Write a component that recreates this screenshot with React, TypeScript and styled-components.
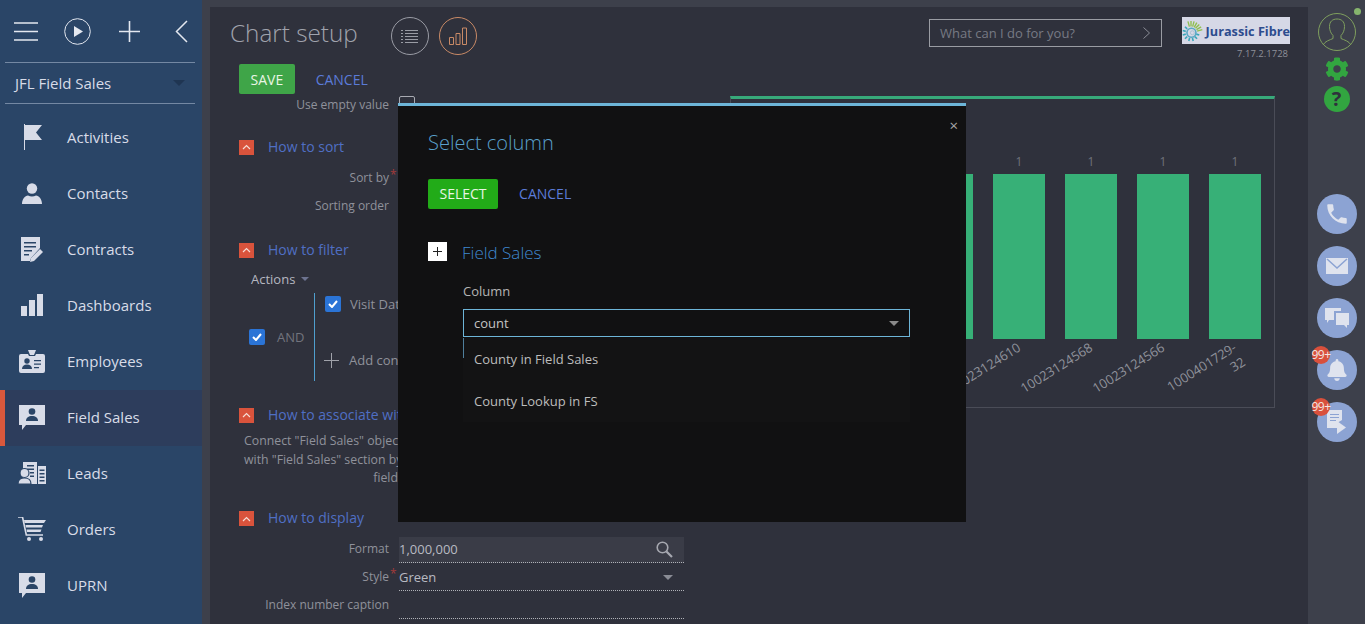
import React from "react";
import styled, { createGlobalStyle } from "styled-components";
import { FaCog, FaBell } from "react-icons/fa";

const GlobalStyle = createGlobalStyle`
  html, body {
    margin: 0;
    height: 100%;
    overflow: hidden;
    background: #3d404b;
    font-family: "Open Sans", "Liberation Sans", sans-serif;
    font-size: 13px;
  }
`;

const NAVY = "#2a4567";

const FlagIcon = () => (
  <svg width="20" height="26" viewBox="-1 0 20 26" fill="currentColor">
    <path d="M1 0h1v26H1zM2 1h17l-6 7.500 6 7.500H2z" />
  </svg>
);
const PersonIcon = () => (
  <svg width="20" height="21" viewBox="0 0 20 21" fill="currentColor">
    <circle cx="10" cy="5.500" r="5.200" />
    <path d="M0 21c0-5 3-8 6-8.500 2.500 1.300 5.500 1.300 8 0 3 .5 6 3.500 6 8.500z" />
  </svg>
);
const ContractIcon = () => (
  <svg width="23" height="25" viewBox="0 0 23 25" fill="currentColor">
    <path d="M0 0h19v11l-9 10-1 3H0z" />
    <path d="M3 5h12v1.500H3zM3 9h12v1.500H3zM3 13h8v1.500H3zM3 17h5v1.500H3z" fill={NAVY} />
    <path d="M19 12l3 3-9 9-4 1 1-4z" />
  </svg>
);
const BarsIcon = () => (
  <svg width="22" height="22" viewBox="0 0 22 22" fill="currentColor">
    <path d="M0 12h6v10H0zM8 6h6v16H8zM16 0h6v22h-6z" />
  </svg>
);
const BadgeIcon = () => (
  <svg width="26" height="23" viewBox="0 0 26 23" fill="currentColor">
    <path d="M9 0h8l-2 5h-4z" />
    <path d="M2 4h7l1 2h6l1-2h7a2 2 0 0 1 2 2v15a2 2 0 0 1-2 2H2a2 2 0 0 1-2-2V6a2 2 0 0 1 2-2z" />
    <circle cx="8" cy="11" r="2.700" fill={NAVY} />
    <path d="M3 19c0-3 2-4.500 5-4.500s5 1.500 5 4.500z" fill={NAVY} />
    <path d="M15 10h7v1.300h-7zM15 13.500h7v1.300h-7zM15 17h5v1.300h-5z" fill={NAVY} />
  </svg>
);
const BubblePersonIcon = () => (
  <svg width="26" height="25" viewBox="0 0 26 25" fill="currentColor">
    <path d="M0 0h26v20H7l-4 5v-5H0z" />
    <circle cx="13" cy="6.500" r="3.300" fill={NAVY} />
    <path d="M7 16c0-3.500 2.500-5 6-5s6 1.500 6 5z" fill={NAVY} />
  </svg>
);
const LeadsIcon = () => (
  <svg width="28" height="22" viewBox="0 0 28 22" fill="currentColor">
    <path d="M5 0h14v22H5z" />
    <path d="M20 4h8v18h-8z" />
    <path d="M9 3h7v1.500H9zM9 6.500h7V8H9zM12 10h4v1.500h-4zM12 13.500h4V15h-4zM21.500 7.500h5V9h-5zM21.500 11h5v1.500h-5zM21.500 14.500h5V16h-5zM21.500 18h5v1.500h-5z" fill={NAVY} />
    <circle cx="6.500" cy="11" r="4.500" stroke={NAVY} strokeWidth="1.200" />
    <path d="M0 22c0-4 2.500-6 6.500-6s6.500 2 6.500 6z" stroke={NAVY} strokeWidth="1.200" />
  </svg>
);
const CartIcon = () => (
  <svg width="28" height="24" viewBox="0 0 28 24" fill="currentColor">
    <path d="M0 0h4.500l3.800 18H25" fill="none" stroke="currentColor" strokeWidth="1.600" />
    <path d="M6 3h22l-2 3H6.500zM7.500 8H25l-1 2.500H8zM8.500 12.500h15l-1 2.500H9z" />
    <circle cx="11" cy="22" r="2" />
    <circle cx="23" cy="22" r="2" />
  </svg>
);

const MENU = [
  { label: "Activities", icon: <FlagIcon /> },
  { label: "Contacts", icon: <PersonIcon /> },
  { label: "Contracts", icon: <ContractIcon /> },
  { label: "Dashboards", icon: <BarsIcon /> },
  { label: "Employees", icon: <BadgeIcon /> },
  { label: "Field Sales", icon: <BubblePersonIcon />, active: true },
  { label: "Leads", icon: <LeadsIcon /> },
  { label: "Orders", icon: <CartIcon /> },
  { label: "UPRN", icon: <BubblePersonIcon /> },
];

const BARS: { value: number; label: string }[] = [
  { value: 1, label: "10023124612" },
  { value: 1, label: "10023124610" },
  { value: 1, label: "10023124568" },
  { value: 1, label: "10023124566" },
  { value: 1, label: "1000401729-\n32" },
];

const Page = styled.div`
  position: relative;
  display: flex;
  width: 1365px;
  height: 624px;
  overflow: hidden;
  background: #3d404b;
`;

const Sidebar = styled.nav`
  width: 202px;
  flex-shrink: 0;
  background: ${NAVY};
  color: #d8dce8;
`;

const QuickBar = styled.div`
  height: 63px;
  margin: 0 7px 0 5px;
  display: flex;
  align-items: center;
  padding-left: 9px;
  box-sizing: border-box;
  border-bottom: 1px solid #7488a3;
  color: #e4e8f0;
`;

const QuickSlot = styled.span<{ $left: number }>`
  display: flex;
  margin-left: ${(p) => p.$left}px;
`;

const WorkplaceSelect = styled.div`
  height: 40px;
  margin: 0 7px 6px 5px;
  padding: 0 10px;
  display: flex;
  align-items: center;
  justify-content: space-between;
  border-bottom: 1px solid #7488a3;
  font-size: 15px;
  color: #d8dce8;
`;

const Caret = styled.span<{ $color?: string; $size?: number }>`
  display: inline-block;
  width: 0;
  height: 0;
  border-left: ${(p) => p.$size ?? 6}px solid transparent;
  border-right: ${(p) => p.$size ?? 6}px solid transparent;
  border-top: ${(p) => p.$size ?? 6}px solid ${(p) => p.$color ?? "#1f3552"};
`;

const MenuItem = styled.div<{ $active?: boolean }>`
  height: 56px;
  display: flex;
  align-items: center;
  font-size: 15px;
  box-sizing: border-box;
  padding-bottom: 2px;
  background: ${(p) => (p.$active ? "#2d3d5c" : "transparent")};
  box-shadow: ${(p) => (p.$active ? "inset 5px 0 0 #d9583c" : "none")};
`;

const MenuIcon = styled.span`
  width: 64px;
  margin-right: 3px;
  display: flex;
  justify-content: center;
`;

const Main = styled.main`
  flex: 1;
  margin: 7px 0 0 8px;
  background: #2f313c;
  min-width: 0;
`;

const Header = styled.header`
  height: 57px;
  display: flex;
  align-items: flex-start;
  padding: 0 18px 0 20px;
`;

const Title = styled.h1`
  margin: 8px 33px 0 0;
  font-size: 24.300px;
  line-height: 36px;
  font-weight: 300;
  color: #a0a3ad;
`;

const ViewButton = styled.div<{ $color: string }>`
  width: 38px;
  height: 38px;
  margin: 10px 10px 0 0;
  box-sizing: border-box;
  border: 1px solid ${(p) => p.$color};
  border-radius: 50%;
  color: ${(p) => p.$color};
  display: flex;
  align-items: center;
  justify-content: center;
`;

const SearchBox = styled.div`
  margin: 12px 20px 0 auto;
  width: 233px;
  height: 28px;
  box-sizing: border-box;
  border: 1px solid #9a9ca3;
  padding: 0 11px 0 10px;
  display: flex;
  align-items: center;
  justify-content: space-between;
  color: #777a84;
  font-size: 13px;
`;

const Brand = styled.div`
  margin-top: 10px;
  display: flex;
  flex-direction: column;
  align-items: flex-end;
`;

const Logo = styled.div`
  width: 108px;
  height: 27px;
  background: #d6d8e6;
  display: flex;
  align-items: center;
  gap: 2px;
  overflow: hidden;
`;

const LogoText = styled.span`
  font-size: 12.700px;
  font-weight: 700;
  color: #2d4c8e;
  white-space: nowrap;
`;

const Version = styled.div`
  margin: 3px 2px 0 0;
  font-size: 9.500px;
  line-height: 14px;
  color: #8e9099;
`;

const Body = styled.div`
  display: flex;
  align-items: flex-start;
`;

const Form = styled.section`
  width: 520px;
  flex-shrink: 0;
  box-sizing: border-box;
  padding-left: 29px;
`;

const Actions = styled.div`
  display: flex;
  align-items: center;
  gap: 21px;
`;

const PrimaryButton = styled.div<{ $color: string }>`
  height: 30px;
  box-sizing: border-box;
  padding: 0 11.500px;
  border-radius: 2px;
  display: flex;
  align-items: center;
  background: ${(p) => p.$color};
  color: #e9f5e4;
  font-size: 14px;
`;

const LinkButton = styled.span`
  color: #5b7bd8;
  font-size: 14px;
`;

const Row = styled.div<{ $height?: number }>`
  display: flex;
  align-items: center;
  height: ${(p) => p.$height ?? 28}px;
  gap: 10px;
`;

const RowLabel = styled.label`
  width: 150px;
  flex-shrink: 0;
  text-align: right;
  color: #8f919b;
  font-size: 12px;
  white-space: nowrap;
`;

const Required = styled.span`
  position: relative;
  &::after {
    content: "*";
    position: absolute;
    left: 1px;
    top: -3px;
    color: #a23a3a;
  }
`;

const EmptyCheck = styled.span`
  width: 16px;
  height: 16px;
  box-sizing: border-box;
  border: 1px solid #a8aab2;
  border-radius: 2px;
`;

const SectionHead = styled.div<{ $top: number }>`
  margin-top: ${(p) => p.$top}px;
  height: 16px;
  display: flex;
  align-items: center;
  gap: 14px;
  color: #4f6fc4;
  font-size: 14px;
  white-space: nowrap;
`;

const SectionTitle = styled.span`
  margin-top: -2px;
`;

const Toggle = styled.span`
  width: 15px;
  height: 15px;
  background: #d9533c;
  display: flex;
  align-items: center;
  justify-content: center;
`;

const SectionBody = styled.div`
  margin-top: 8px;
`;

const ActionsMenu = styled.div`
  height: 27px;
  padding: 0 0 2px 12px;
  box-sizing: border-box;
  display: flex;
  align-items: center;
  gap: 6px;
  color: #b5b7c0;
  font-size: 13px;
`;

const FilterGroup = styled.div`
  display: flex;
  height: 88px;
`;

const GroupLogic = styled.div`
  width: 75px;
  box-sizing: border-box;
  padding-left: 10px;
  display: flex;
  align-items: center;
  gap: 12px;
  color: #72747e;
  font-size: 13px;
`;

const GroupItems = styled.div`
  flex: 1;
  border-left: 1px solid #4f9fce;
  padding-left: 10px;
  display: flex;
  flex-direction: column;
  gap: 34px;
`;

const FilterLine = styled.div<{ $gap: number }>`
  height: 22px;
  display: flex;
  align-items: center;
  gap: ${(p) => p.$gap}px;
  color: #8f919b;
  font-size: 13px;
  white-space: nowrap;
`;

const CheckBox = styled.span`
  width: 16px;
  height: 16px;
  border-radius: 2px;
  background: #2b74d6;
  display: flex;
  align-items: center;
  justify-content: center;
`;

const AddMark = styled.svg`
  margin-left: -1px;
`;

const Description = styled.div`
  width: 154px;
  margin: 9px 0 0 5px;
  text-align: right;
  white-space: nowrap;
  font-size: 12.300px;
  line-height: 18.500px;
  color: #8f919b;
`;

const FieldBox = styled.div<{ $filled?: boolean }>`
  width: 285px;
  height: 26px;
  margin-top: 2px;
  box-sizing: border-box;
  display: flex;
  align-items: center;
  justify-content: space-between;
  padding-right: 11px;
  background: ${(p) => (p.$filled ? "#3a3c47" : "transparent")};
  border-bottom: 1px dotted #b0b2b8;
  color: #b8bac2;
  font-size: 13px;
`;

const Chart = styled.section`
  width: 545px;
  height: 312px;
  margin-top: 32px;
  box-sizing: border-box;
  border: 1px solid #4a4c57;
  border-top: 3px solid #37a97a;
  padding: 55px 13px 0 0;
  display: flex;
  justify-content: flex-end;
  gap: 20px;
`;

const BarColumn = styled.div`
  width: 52px;
  display: flex;
  flex-direction: column;
`;

const BarValue = styled.div`
  height: 16px;
  margin-bottom: 4px;
  text-align: center;
  font-size: 12px;
  line-height: 16px;
  color: #6f717b;
`;

const BarFill = styled.div`
  height: 165px;
  background: #37b077;
`;

const BarLabelRow = styled.div`
  display: flex;
  justify-content: flex-end;
  padding: 0 30px 0 0;
`;

const BarLabel = styled.span`
  flex-shrink: 0;
  text-align: right;
  white-space: pre;
  font-size: 13px;
  line-height: 17px;
  color: #8f919b;
  transform: rotate(-32deg);
  transform-origin: right top;
`;

const Rail = styled.aside`
  width: 57px;
  flex-shrink: 0;
  display: flex;
  flex-direction: column;
  align-items: center;
`;

const Avatar = styled.div`
  position: relative;
  margin-top: 13px;
  width: 38px;
  height: 38px;
  color: #7f9f5e;
`;

const StatusDot = styled.span`
  position: absolute;
  top: -5px;
  right: -5px;
  width: 7px;
  height: 7px;
  border-radius: 50%;
  background: #86b46d;
`;

const GearWrap = styled.div`
  margin-top: 6px;
  height: 24px;
  color: #32a540;
`;

const HelpBadge = styled.div`
  margin-top: 5px;
  width: 26px;
  height: 26px;
  border-radius: 50%;
  background: #32a540;
  color: #2f313c;
  font-size: 20px;
  font-weight: 700;
  line-height: 26px;
  text-align: center;
`;

const RailActions = styled.div`
  margin-top: 82px;
  display: flex;
  flex-direction: column;
  gap: 12px;
`;

const RailButton = styled.div`
  position: relative;
  width: 40px;
  height: 40px;
  border-radius: 50%;
  background: #8ca3d3;
  color: #dfe3ee;
  display: flex;
  align-items: center;
  justify-content: center;
`;

const CountBadge = styled.span`
  position: absolute;
  top: -4px;
  left: -5px;
  width: 18px;
  height: 18px;
  border-radius: 50%;
  background: #d9503c;
  color: #f3e6e2;
  font-size: 12px;
  letter-spacing: -0.5px;
  line-height: 18px;
  white-space: nowrap;
`;

const Modal = styled.div`
  position: absolute;
  left: 398px;
  top: 103px;
  width: 568px;
  height: 419px;
  box-sizing: border-box;
  background: #111112;
  border-top: 3px solid #6db5d8;
  padding: 23px 30px 0;
`;

const CloseMark = styled.span`
  position: absolute;
  top: 11px;
  right: 8px;
  color: #a8a8a8;
  font-size: 15px;
  line-height: 16px;
`;

const ModalTitle = styled.h2`
  margin: 0;
  font-size: 20px;
  line-height: 28px;
  font-weight: 300;
  color: #5aa0cb;
`;

const ModalActions = styled(Actions)`
  margin-top: 22px;
  > div {
    padding-bottom: 1px;
  }
  > span {
    margin-top: -2px;
  }
`;

const Expander = styled.div`
  margin-top: 33px;
  height: 19px;
  display: flex;
  align-items: center;
  gap: 15px;
  font-size: 17px;
  font-weight: 300;
  color: #3f88cf;
`;

const ExpanderTitle = styled.span`
  margin-top: 2px;
`;

const PlusBox = styled.span`
  width: 19px;
  height: 19px;
  background: #fff;
  display: flex;
  align-items: center;
  justify-content: center;
`;

const ColumnField = styled.div`
  margin: 22px 0 0 35px;
  width: 447px;
`;

const ColumnLabel = styled.div`
  font-size: 13px;
  line-height: 16px;
  color: #b5b5b5;
`;

const SelectWrap = styled.div`
  position: relative;
  margin-top: 10px;
`;

const SelectInput = styled.div`
  height: 28px;
  box-sizing: border-box;
  border: 1px solid #6db5d8;
  padding: 0 10px;
  display: flex;
  align-items: center;
  justify-content: space-between;
  color: #c4c4c4;
  font-size: 13px;
`;

const Dropdown = styled.div`
  position: absolute;
  top: 29px;
  left: 0;
  right: 0;
  background: #131314;
  &::before {
    content: "";
    position: absolute;
    left: 0;
    top: 0;
    width: 1px;
    height: 20px;
    background: #4f7f9c;
  }
`;

const Option = styled.div`
  height: 42px;
  padding-left: 11px;
  display: flex;
  align-items: center;
  color: #bdbdbd;
  font-size: 13px;
`;

const Swirl = () => (
  <svg width="24" height="27" viewBox="0 0 24 27" fill="none">
    {[-15, 0, 15, 30, 45, 60, 75].map((a) => (
      <path key={a} d="M10 3V9" stroke="#8fbf4d" strokeWidth="1.500" transform={`rotate(${a} 10 16)`} />
    ))}
    {[105, 135, 165, 195, 225, 255, 285, 315].map((a) => (
      <path key={a} d="M10 6.500V10" stroke="#3aa7b8" strokeWidth="1.800" transform={`rotate(${a} 10 16)`} />
    ))}
    <circle cx="10.500" cy="16" r="5" stroke="#5aa9c4" strokeWidth="1.800" />
    <circle cx="11.500" cy="16" r="2.200" stroke="#a8c0d0" strokeWidth="1" />
  </svg>
);

const Chevron = () => (
  <svg width="9" height="6" viewBox="0 0 9 6" fill="none" stroke="#f6dcd5" strokeWidth="1.200">
    <path d="M1 5l3.500-3.500L8 5" />
  </svg>
);

const Tick = () => (
  <svg width="10" height="8" viewBox="0 0 10 8" fill="none" stroke="#fff" strokeWidth="2">
    <path d="M1 4l3 3 5-6" />
  </svg>
);

const Section: React.FC<{ title: string; top: number }> = ({ title, top }) => (
  <SectionHead $top={top}>
    <Toggle>
      <Chevron />
    </Toggle>
    <SectionTitle>{title}</SectionTitle>
  </SectionHead>
);

const App: React.FC = () => (
  <Page>
    <GlobalStyle />
    <Sidebar>
      <QuickBar>
        <QuickSlot $left={0}>
          <svg width="24" height="19" viewBox="0 0 24 19" stroke="currentColor" strokeWidth="1.600">
            <path d="M0 1h24M0 9.500h24M0 18h24" />
          </svg>
        </QuickSlot>
        <QuickSlot $left={26}>
          <svg width="27" height="27" viewBox="0 0 27 27" fill="none" stroke="currentColor">
            <circle cx="13.500" cy="13.500" r="12.800" />
            <path d="M10 8l9 5.500-9 5.500z" fill="currentColor" stroke="none" />
          </svg>
        </QuickSlot>
        <QuickSlot $left={28}>
          <svg width="21" height="21" viewBox="0 0 21 21" stroke="currentColor" strokeWidth="1.600">
            <path d="M10.500 0v21M0 10.500h21" />
          </svg>
        </QuickSlot>
        <QuickSlot $left={35}>
          <svg width="13" height="23" viewBox="0 0 13 23" fill="none" stroke="currentColor" strokeWidth="1.500">
            <path d="M12 1L1.500 11.500 12 22" />
          </svg>
        </QuickSlot>
      </QuickBar>
      <WorkplaceSelect>
        JFL Field Sales
        <Caret />
      </WorkplaceSelect>
      {MENU.map((item) => (
        <MenuItem key={item.label} $active={item.active}>
          <MenuIcon>{item.icon}</MenuIcon>
          {item.label}
        </MenuItem>
      ))}
    </Sidebar>

    <Main>
      <Header>
        <Title>Chart setup</Title>
        <ViewButton $color="#9a9ca5">
          <svg width="17" height="15" viewBox="0 0 17 15" stroke="currentColor" strokeWidth="1">
            <path d="M4 1.500h13M4 4.500h13M4 7.500h13M4 10.500h13M4 13.500h13M0 1.500h2M0 4.500h2M0 7.500h2M0 10.500h2M0 13.500h2" />
          </svg>
        </ViewButton>
        <ViewButton $color="#c98a66">
          <svg width="18" height="18" viewBox="0 0 18 18" fill="none" stroke="currentColor">
            <path d="M.5 10.500h4v7h-4zM7 6.500h4v11H7zM13.500 1h4v16.500h-4z" />
          </svg>
        </ViewButton>
        <SearchBox>
          What can I do for you?
          <svg width="7" height="12" viewBox="0 0 7 12" fill="none" stroke="#8a8c95">
            <path d="M.5.500L6.500 6 .5 11.500" />
          </svg>
        </SearchBox>
        <Brand>
          <Logo>
            <Swirl />
            <LogoText>Jurassic Fibre</LogoText>
          </Logo>
          <Version>7.17.2.1728</Version>
        </Brand>
      </Header>

      <Body>
        <Form>
          <Actions>
            <PrimaryButton $color="#3fa548">SAVE</PrimaryButton>
            <LinkButton>CANCEL</LinkButton>
          </Actions>
          <Row $height={20}>
            <RowLabel>Use empty value</RowLabel>
            <EmptyCheck />
          </Row>

          <Section title="How to sort" top={25} />
          <SectionBody>
            <Row>
              <RowLabel>
                Sort by<Required />
              </RowLabel>
            </Row>
            <Row>
              <RowLabel>Sorting order</RowLabel>
            </Row>
          </SectionBody>

          <Section title="How to filter" top={23} />
          <SectionBody>
            <ActionsMenu>
              Actions
              <Caret $color="#6d7390" $size={4} />
            </ActionsMenu>
            <FilterGroup>
              <GroupLogic>
                <CheckBox>
                  <Tick />
                </CheckBox>
                AND
              </GroupLogic>
              <GroupItems>
                <FilterLine $gap={9}>
                  <CheckBox>
                    <Tick />
                  </CheckBox>
                  Visit Date
                </FilterLine>
                <FilterLine $gap={10}>
                  <AddMark width="15" height="15" viewBox="0 0 15 15" stroke="#a0a2aa">
                    <path d="M7.500 0v15M0 7.500h15" />
                  </AddMark>
                  Add condition
                </FilterLine>
              </GroupItems>
            </FilterGroup>
          </SectionBody>

          <Section title="How to associate with" top={26} />
          <Description>
            Connect "Field Sales" object
            <br />
            with "Field Sales" section by
            <br />
            field
          </Description>

          <Section title="How to display" top={23} />
          <SectionBody>
            <Row>
              <RowLabel>Format</RowLabel>
              <FieldBox $filled>
                1,000,000
                <svg width="17" height="17" viewBox="0 0 17 17" fill="none" stroke="#a6a8b0" strokeWidth="1.600">
                  <circle cx="6.500" cy="6.500" r="5.300" />
                  <path d="M10.500 10.500l5.500 5.500" strokeWidth="2.200" />
                </svg>
              </FieldBox>
            </Row>
            <Row>
              <RowLabel>
                Style<Required />
              </RowLabel>
              <FieldBox>
                Green
                <Caret $color="#8a8c95" $size={5} />
              </FieldBox>
            </Row>
            <Row>
              <RowLabel>Index number caption</RowLabel>
              <FieldBox />
            </Row>
          </SectionBody>
        </Form>

        <Chart>
          {BARS.map((bar) => (
            <BarColumn key={bar.label}>
              <BarValue>{bar.value}</BarValue>
              <BarFill />
              <BarLabelRow>
                <BarLabel>{bar.label}</BarLabel>
              </BarLabelRow>
            </BarColumn>
          ))}
        </Chart>
      </Body>
    </Main>

    <Rail>
      <Avatar>
        <svg width="38" height="38" viewBox="0 0 38 38" fill="none" stroke="currentColor">
          <circle cx="19" cy="19" r="18.500" />
          <path d="M5 32c2-4 7-5 10-6.500v-3c-2-2-3.500-5-3.500-9 0-5 3-7.500 7.500-7.500s7.500 2.500 7.500 7.500c0 4-1.500 7-3.500 9v3c3 1.500 8 2.500 10 6.500" />
        </svg>
        <StatusDot />
      </Avatar>
      <GearWrap>
        <FaCog size={24} />
      </GearWrap>
      <HelpBadge>?</HelpBadge>
      <RailActions>
        <RailButton>
          <svg width="26" height="26" viewBox="0 0 24 24" fill="currentColor">
            <path d="M6.600 10.800c1.400 2.800 3.800 5.100 6.600 6.600l2.200-2.200c.3-.3.700-.4 1-.2 1.100.4 2.300.6 3.600.6.600 0 1 .4 1 1V20c0 .6-.4 1-1 1C10.600 21 3 13.400 3 4c0-.6.400-1 1-1h3.500c.6 0 1 .4 1 1 0 1.300.2 2.500.6 3.600.1.300 0 .7-.2 1z" />
          </svg>
        </RailButton>
        <RailButton>
          <svg width="22" height="16" viewBox="0 0 22 16" fill="currentColor">
            <path d="M0 0h22v16H0z" />
            <path d="M1 1l10 9 10-9" fill="none" stroke="#8ca3d3" strokeWidth="1.500" />
          </svg>
        </RailButton>
        <RailButton>
          <svg width="24" height="20" viewBox="0 0 24 20" fill="currentColor">
            <path d="M0 0h16v3H9v9H4l-2 3v-3H0z" />
            <path d="M11 5h13v12h-2v3l-3-3h-8z" />
          </svg>
        </RailButton>
        <RailButton>
          <FaBell size={22} />
          <CountBadge>99+</CountBadge>
        </RailButton>
        <RailButton>
          <svg width="19" height="24" viewBox="0 0 19 24" fill="currentColor">
            <path d="M0 0h15v10l-5 3v5H0z" />
            <path d="M3 4h9v1H3zM3 7h9v1H3zM3 10h6v1H3z" fill="#8ca3d3" />
            <path d="M10 11l9 6.500-9 6.500z" />
          </svg>
          <CountBadge>99+</CountBadge>
        </RailButton>
      </RailActions>
    </Rail>

    <Modal>
      <CloseMark>×</CloseMark>
      <ModalTitle>Select column</ModalTitle>
      <ModalActions>
        <PrimaryButton $color="#22ab18">SELECT</PrimaryButton>
        <LinkButton>CANCEL</LinkButton>
      </ModalActions>
      <Expander>
        <PlusBox>
          <svg width="9" height="9" viewBox="0 0 9 9" stroke="#222">
            <path d="M4.500 0v9M0 4.500h9" />
          </svg>
        </PlusBox>
        <ExpanderTitle>Field Sales</ExpanderTitle>
      </Expander>
      <ColumnField>
        <ColumnLabel>Column</ColumnLabel>
        <SelectWrap>
          <SelectInput>
            count
            <Caret $color="#8a8a8a" $size={5} />
          </SelectInput>
          <Dropdown>
            <Option>County in Field Sales</Option>
            <Option>County Lookup in FS</Option>
          </Dropdown>
        </SelectWrap>
      </ColumnField>
    </Modal>
  </Page>
);

export default App;
